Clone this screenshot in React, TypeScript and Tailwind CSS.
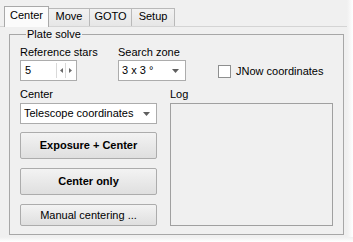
import React from "react";

const font = { fontFamily: '"Liberation Sans", Arial, sans-serif' };

const Tab = ({ label, active, width }: { label: string; active?: boolean; width: number }) => (
  <div
    className={
      active
        ? "relative z-10 -mb-px flex h-[21px] items-start justify-center border border-b-0 border-[#a9a9a9] bg-[#fbfbfb] pt-[2px]"
        : "flex h-[18px] items-start justify-center border border-l-0 border-b-0 border-[#b9b9b9] bg-gradient-to-b from-[#f2f2f2] to-[#e6e6e6] pt-[1px]"
    }
    style={{ width }}
  >
    <span className="text-[11px] leading-[13px] text-black">{label}</span>
  </div>
);

const DownArrow = () => (
  <svg width="7" height="4" viewBox="0 0 7 4">
    <path d="M0 0 H7 L3.5 4 Z" fill="#5f5f5f" />
  </svg>
);

const Combo = ({ value, width }: { value: string; width: number }) => (
  <div
    className="flex h-[21px] items-center justify-between border border-[#acacac] bg-white pl-[3px] pr-[6px]"
    style={{ width }}
  >
    <span className="text-[11px] leading-[13px] text-black">{value}</span>
    <DownArrow />
  </div>
);

const Button = ({ label, bold, h }: { label: string; bold?: boolean; h: number }) => (
  <button
    className={
      "flex w-[137px] items-center justify-center rounded-[2px] border border-[#acacac] bg-gradient-to-b from-[#f3f3f3] to-[#dfdfdf] text-[11px] leading-[13px] text-black " +
      (bold ? "font-bold" : "")
    }
    style={{ height: h }}
  >
    {label}
  </button>
);

export default function App() {
  return (
    <div className="flex h-[242px] w-[353px] flex-col overflow-hidden bg-[#f0f0f0]" style={font}>
      <div className="flex h-[237px]">
        <div className="w-[347px]">
          {/* tabs */}
          <div className="flex h-[26px] items-end pl-[4px]">
            <Tab label="Center" active width={45} />
            <Tab label="Move" width={41} />
            <Tab label="GOTO" width={42} />
            <Tab label="Setup" width={43} />
          </div>

          {/* pane */}
          <div className="h-[211px] border-t border-[#d4d4d4] pl-[9px] pr-[3px]">
            <fieldset className="mt-px h-[207px] border border-[#a7a7a7] pb-[9px] pl-[10px] pr-[10px]">
              <legend className="ml-[6px] px-[1px] text-[11px] leading-[13px] text-black">Plate solve</legend>

              {/* first row */}
              <div className="mt-[5px] flex items-start">
                <div className="flex w-[98px] flex-col gap-px">
                  <span className="text-[11px] leading-[13px] text-black">Reference stars</span>
                  <div className="flex h-[21px] w-[57px] items-center border border-[#acacac] bg-white pl-[4px]">
                    <span className="flex-1 text-[11px] leading-[13px] text-black">5</span>
                    <div className="flex h-full items-center">
                      <div className="flex h-[15px] w-[9px] items-center justify-center border-l border-[#d9d9d9]">
                        <svg width="3" height="5" viewBox="0 0 3 5">
                          <path d="M3 0 V5 L0 2.5 Z" fill="#6a6a6a" />
                        </svg>
                      </div>
                      <div className="mr-[2px] flex h-[15px] w-[9px] items-center justify-center border-l border-[#d9d9d9]">
                        <svg width="3" height="5" viewBox="0 0 3 5">
                          <path d="M0 0 V5 L3 2.5 Z" fill="#6a6a6a" />
                        </svg>
                      </div>
                    </div>
                  </div>
                </div>
                <div className="flex w-[100px] flex-col gap-px">
                  <span className="text-[11px] leading-[13px] text-black">Search zone</span>
                  <Combo value="3 x 3 °" width={68} />
                </div>
                <label className="mt-[19px] flex items-center gap-[5px]">
                  <span className="h-[13px] w-[13px] border border-[#8e8f8f] bg-white" />
                  <span className="text-[11px] leading-[13px] text-black">JNow coordinates</span>
                </label>
              </div>

              {/* second row */}
              <div className="mt-[7px] flex items-start gap-[13px]">
                <div className="flex w-[137px] flex-col">
                  <span className="text-[11px] leading-[13px] text-black">Center</span>
                  <div className="mt-[2px]">
                    <Combo value="Telescope coordinates" width={137} />
                  </div>
                  <div className="mt-[8px] flex flex-col gap-[9px]">
                    <Button label="Exposure + Center" bold h={27} />
                    <Button label="Center only" bold h={27} />
                    <Button label="Manual centering ..." h={22} />
                  </div>
                </div>
                <div className="flex flex-1 flex-col">
                  <span className="text-[11px] leading-[13px] text-black">Log</span>
                  <div className="mt-[2px] h-[123px] border border-[#a0a0a0] bg-[#f0f0f0]" />
                </div>
              </div>
            </fieldset>
          </div>
        </div>
        <div className="flex-1 bg-gradient-to-r from-[#f0f0f0] to-white" />
      </div>
      <div className="flex-1 bg-gradient-to-b from-[#f0f0f0] to-white" />
    </div>
  );
}
